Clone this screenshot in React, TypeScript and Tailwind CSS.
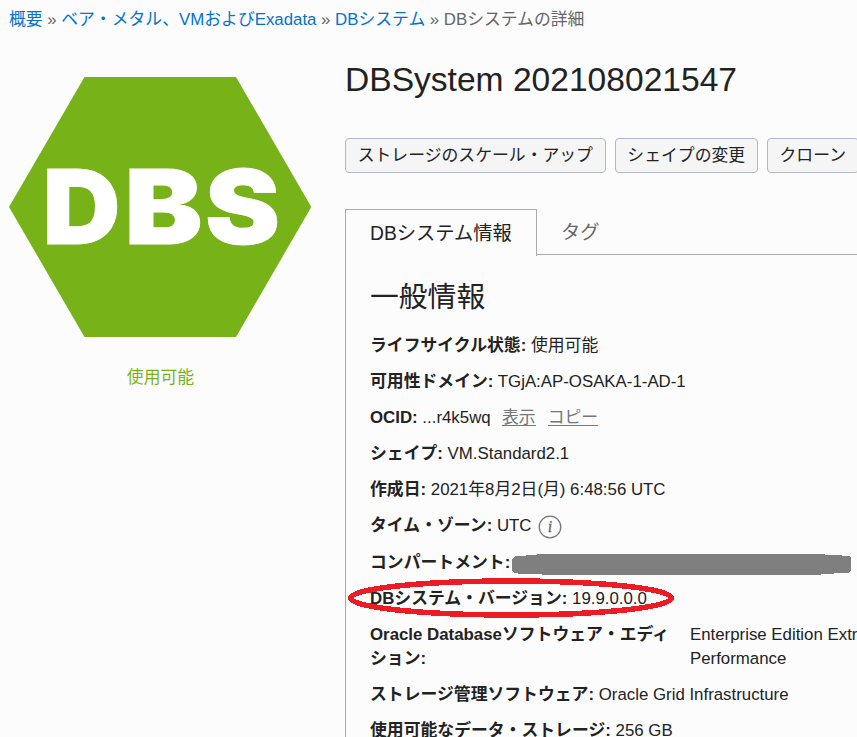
import type { ReactNode } from "react";

function Row({ label, tall, children }: { label: string; tall?: boolean; children?: ReactNode }) {
  return (
    <div className={`flex items-start whitespace-pre ${tall ? "h-[37px]" : "h-9"}`}>
      <span className="font-bold">{label}</span>
      <span className="font-bold">:</span>
      {children}
    </div>
  );
}

function ActionButton({ children }: { children: ReactNode }) {
  return (
    <button className="h-[35px] shrink-0 whitespace-nowrap rounded-[4px] border border-[#b4b8c5] bg-[#f5f5f5] px-[11.7px] leading-[31px]">
      {children}
    </button>
  );
}

function InfoIcon() {
  return (
    <svg className="ml-[6px] mt-px" width="24" height="24" viewBox="0 0 24 24">
      <circle cx="12" cy="12" r="10.8" fill="none" stroke="#777" strokeWidth="1.3" />
      <text x="12" y="17" textAnchor="middle" fontSize="16" fontStyle="italic" fontFamily="Liberation Serif, serif" fill="#666" stroke="#666" strokeWidth="0.3">
        i
      </text>
    </svg>
  );
}

function StatusHexagon() {
  return (
    <svg className="block" width="303" height="262" viewBox="9 76 303 262">
      <polygon points="84.5,77 236,77 311.3,207 236,337 84.5,337 9,207" fill="#77b318" />
      <g fill="#fff" stroke="#fff" strokeWidth="0.8" fontFamily="Inter, sans-serif" fontWeight="900" fontSize="103.5">
        <text x="42.5" y="243.6" textLength="78" lengthAdjust="spacingAndGlyphs">D</text>
        <text x="124.5" y="243.6" textLength="78" lengthAdjust="spacingAndGlyphs">B</text>
        <text x="205" y="243.6" textLength="75" lengthAdjust="spacingAndGlyphs">S</text>
      </g>
    </svg>
  );
}

export default function App() {
  return (
    <div className="h-[737px] w-full overflow-hidden bg-[#fcfcfc] font-['Liberation_Sans','Noto_Sans_CJK_JP',sans-serif] text-[16.84px] leading-6 text-[#222]">
      <nav className="flex h-[76px] items-start gap-[4.6px] whitespace-nowrap pl-[9px] pt-2 text-[16.84px] text-[#666]">
        <a className="text-[#0572ce]">概要</a>
        <span>»</span>
        <a className="text-[#0572ce]">ベア・メタル、VMおよびExadata</a>
        <span>»</span>
        <a className="text-[#0572ce]">DBシステム</a>
        <span>»</span>
        <span>DBシステムの詳細</span>
      </nav>
      <div className="flex">
        <aside className="w-[345px] shrink-0 pl-[9px]">
          <StatusHexagon />
          <p className="mt-[28px] w-[303px] text-center text-[#77b318]">使用可能</p>
        </aside>
        <main className="-mt-4 w-[512px] shrink-0">
          <h1 className="h-[78px] whitespace-nowrap text-[33.6px] leading-[40px]">DBSystem 202108021547</h1>
          <div className="flex gap-[9px]">
            <ActionButton>ストレージのスケール・アップ</ActionButton>
            <ActionButton>シェイプの変更</ActionButton>
            <ActionButton>クローン</ActionButton>
          </div>
          <div className="mt-9 flex h-[46px] text-[19.3px]">
            <div className="h-[47px] w-[192px] shrink-0 border border-b-0 border-[#aaa] pl-6 leading-[48px]">DBシステム情報</div>
            <div className="flex-1 border-b border-[#aaa] pl-6 leading-[48px] text-[#666]">タグ</div>
          </div>
          <section className="h-[482px] border-l border-[#aaa] pl-6">
            <h2 className="h-[79px] pt-[22px] text-[28.8px] leading-10">一般情報</h2>
            <Row label="ライフサイクル状態"> 使用可能</Row>
            <Row label="可用性ドメイン"> TGjA:AP-OSAKA-1-AD-1</Row>
            <Row label="OCID">
              {" ...r4k5wq"}
              <a className="ml-[11.4px] h-[20px] border-b border-[#767676] text-[#767676]">表示</a>
              <a className="ml-3 h-[20px] border-b border-[#767676] text-[#767676]">コピー</a>
            </Row>
            <Row label="シェイプ"> VM.Standard2.1</Row>
            <Row label="作成日"> 2021年8月2日(月) 6:48:56 UTC</Row>
            <Row label="タイム・ゾーン" tall>
              {" UTC"}
              <InfoIcon />
            </Row>
            <Row label="コンパートメント">
              <svg className="ml-[2px] mt-[3px] shrink-0" width="340" height="22" viewBox="0 0 340 22" shapeRendering="crispEdges">
                <path d="M3 2 L25 1 V0 H313 V1 H330 V2 H337 L339 4 V16 L337 19 H322 V20 H309 V21 H30 V20 H10 L2 19 L0 16 V5 Z" fill="#7f7f7f" />
              </svg>
            </Row>
            <div className="relative">
              <Row label="DBシステム・バージョン"> 19.9.0.0.0</Row>
              <svg className="absolute -left-[23px] -top-[9px]" width="328" height="40" viewBox="0 0 328 40" shapeRendering="crispEdges">
                <ellipse cx="164" cy="20" rx="160.5" ry="17" fill="none" stroke="#ed1c24" strokeWidth="5.5" />
              </svg>
            </div>
            <div className="flex h-[60px] items-start">
              <div className="w-[320px] shrink-0 whitespace-nowrap font-bold">
                Oracle Databaseソフトウェア・エディ
                <br />
                ション:
              </div>
              <div className="shrink-0 whitespace-nowrap">
                Enterprise Edition Extreme
                <br />
                Performance
              </div>
            </div>
            <Row label="ストレージ管理ソフトウェア"> Oracle Grid Infrastructure</Row>
            <Row label="使用可能なデータ・ストレージ"> 256 GB</Row>
          </section>
        </main>
      </div>
    </div>
  );
}
